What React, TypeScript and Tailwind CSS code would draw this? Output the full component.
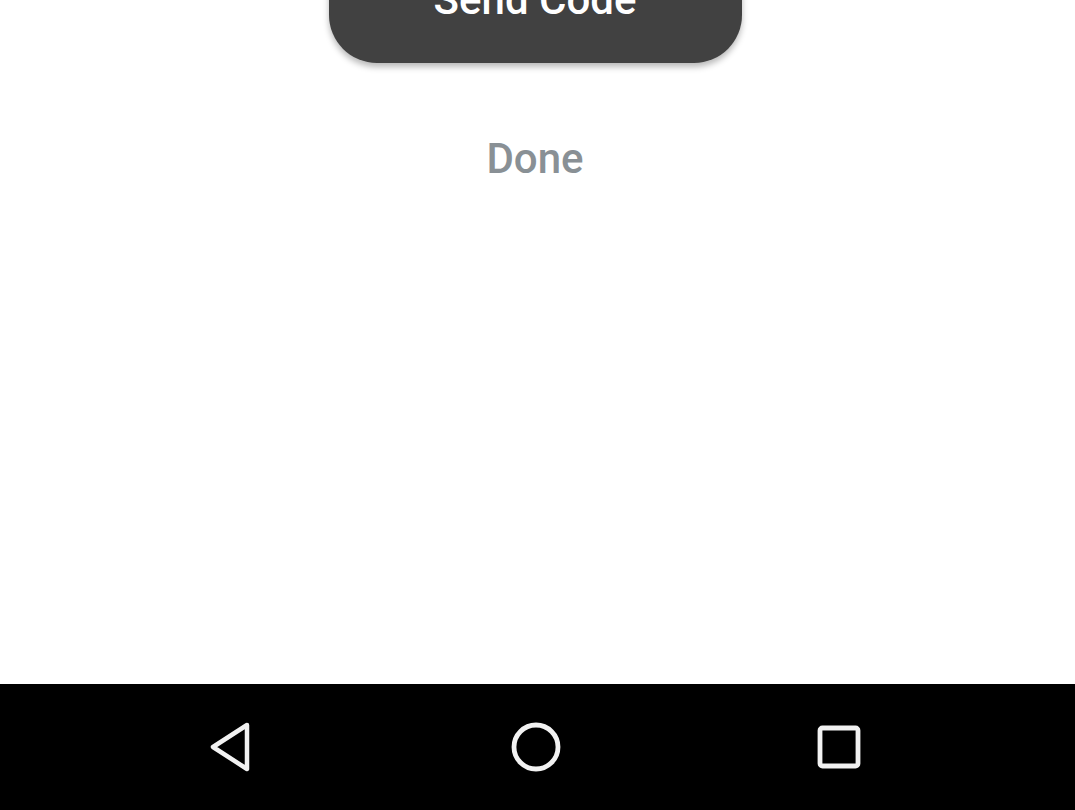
export default function App() {
  return (
    <div className="w-[1075px] h-[810px] bg-white flex flex-col overflow-hidden font-['Roboto',sans-serif]">
      <div className="flex-1 flex flex-col items-center pr-[5px]">
        <button className="-mt-[63px] w-[413px] h-[126px] rounded-[48px] bg-[#414141] text-white text-[42px] leading-none font-medium flex items-center justify-center shadow-[0_4px_6px_rgba(0,0,0,0.28)]">
          Send Code
        </button>
        <div className="mt-[75px] text-[42px] leading-none font-medium text-[#899095]">
          Done
        </div>
      </div>

      <div className="h-[126px] bg-black flex items-center pl-[81px]">
        <div className="w-[303px] flex justify-center">
          <svg width="48" height="52" viewBox="0 0 48 52" className="ml-[-4px]">
            <path
              d="M40 4 L6 26 L40 48 Z"
              fill="none"
              stroke="#f2f2f2"
              strokeWidth="4.5"
              strokeLinejoin="round"
            />
          </svg>
        </div>
        <div className="w-[303px] flex justify-center">
          <svg width="54" height="54" viewBox="0 0 54 54">
            <circle cx="27" cy="27" r="22" fill="none" stroke="#f2f2f2" strokeWidth="4.8" />
          </svg>
        </div>
        <div className="w-[303px] flex justify-center">
          <svg width="48" height="48" viewBox="0 0 48 48">
            <rect x="5" y="5" width="38" height="38" rx="2.5" fill="none" stroke="#f2f2f2" strokeWidth="4.8" />
          </svg>
        </div>
      </div>
    </div>
  );
}
